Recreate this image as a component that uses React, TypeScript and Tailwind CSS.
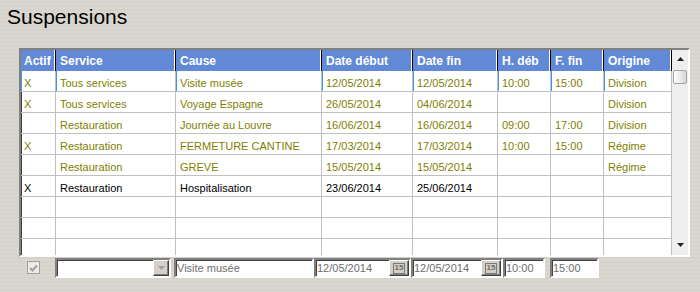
import React from 'react';

type Col = { label: string; w: string; pl: string };

const cols: Col[] = [
  { label: 'Actif', w: 'w-[35px]', pl: 'pl-[3px]' },
  { label: 'Service', w: 'w-[120px]', pl: 'pl-[4px]' },
  { label: 'Cause', w: 'w-[146px]', pl: 'pl-[4px]' },
  { label: 'Date début', w: 'w-[91px]', pl: 'pl-[4px]' },
  { label: 'Date fin', w: 'w-[85px]', pl: 'pl-[4px]' },
  { label: 'H. déb', w: 'w-[53px]', pl: 'pl-[4px]' },
  { label: 'F. fin', w: 'w-[53px]', pl: 'pl-[4px]' },
  { label: 'Origine', w: 'w-[68px]', pl: 'pl-[4px]' },
];

type Row = { cells: string[]; color: string };

const rows: Row[] = [
  { cells: ['X', 'Tous services', 'Visite musée', '12/05/2014', '12/05/2014', '10:00', '15:00', 'Division'], color: 'text-[#808000]' },
  { cells: ['X', 'Tous services', 'Voyage Espagne', '26/05/2014', '04/06/2014', '', '', 'Division'], color: 'text-[#808000]' },
  { cells: ['', 'Restauration', 'Journée au Louvre', '16/06/2014', '16/06/2014', '09:00', '17:00', 'Division'], color: 'text-[#808000]' },
  { cells: ['X', 'Restauration', 'FERMETURE CANTINE', '17/03/2014', '17/03/2014', '10:00', '15:00', 'Régime'], color: 'text-[#808000]' },
  { cells: ['', 'Restauration', 'GREVE', '15/05/2014', '15/05/2014', '', '', 'Régime'], color: 'text-[#808000]' },
  { cells: ['X', 'Restauration', 'Hospitalisation', '23/06/2014', '25/06/2014', '', '', ''], color: 'text-black' },
  { cells: ['', '', '', '', '', '', '', ''], color: 'text-black' },
  { cells: ['', '', '', '', '', '', '', ''], color: 'text-black' },
  { cells: ['', '', '', '', '', '', '', ''], color: 'text-black' },
];

const sunken =
  'border-2 border-t-[#808080] border-l-[#808080] border-r-white border-b-white shadow-[inset_1px_1px_0_#404040]';

function CalButton() {
  return (
    <div className="ml-auto flex h-full w-[20px] shrink-0 items-center justify-center border border-t-white border-l-white border-r-[#404040] border-b-[#404040] bg-[#d4d0c8] shadow-[inset_-1px_-1px_0_#808080]">
      <div className="flex h-[11px] w-[12px] items-center justify-center border border-[#7a7a7a] text-[8px] leading-none font-bold text-[#6e6e6e]">
        15
      </div>
    </div>
  );
}

export default function App() {
  return (
    <div className="h-[292px] w-[700px] overflow-hidden bg-[repeating-linear-gradient(180deg,#dbd8d1_0px,#dbd8d1_1px,#d3d0c9_1px,#d3d0c9_2px,#d8d5ce_2px,#d8d5ce_4px)] font-['Liberation_Sans',Arial,sans-serif]">
      <div className="pl-[7px] pt-[5px] text-[21px] leading-[24px] text-black">Suspensions</div>

      <div className={`ml-[19px] mt-[19px] flex h-[209px] w-[671px] overflow-hidden bg-white ${sunken}`}>
        <div className="flex w-[651px] flex-col overflow-hidden">
          <div className="flex h-[21px] shrink-0 bg-[#6189d5]">
            {cols.map((c) => (
              <div
                key={c.label}
                className={`${c.w} ${c.pl} h-full shrink-0 border-r border-black pt-[1px] text-[12px] leading-[20px] font-bold whitespace-nowrap text-white shadow-[inset_-1px_0_0_#ffffff]`}
              >
                {c.label}
              </div>
            ))}
          </div>
          {rows.map((r, ri) => (
            <div key={ri} className={`flex h-[21px] shrink-0 ${r.color}`}>
              {r.cells.map((v, ci) => (
                <div
                  key={ci}
                  className={`${cols[ci].w} ${cols[ci].pl} h-full shrink-0 overflow-hidden border-r border-b border-[#c0c0c0] pt-[2px] text-[11px] leading-[20px] whitespace-nowrap ${
                    ri === 0 ? 'shadow-[inset_1px_0_0_#3d95f5]' : ''
                  }`}
                >
                  {v}
                </div>
              ))}
            </div>
          ))}
        </div>

        <div className="flex w-[16px] shrink-0 flex-col items-center bg-[#eeeeee]">
          <svg width="7" height="4" viewBox="0 0 7 4" className="mt-[7px]">
            <path d="M3.5 0 L7 4 L0 4 Z" fill="#222" />
          </svg>
          <div className="mt-[9px] h-[14px] w-[14px] rounded-[2px] border border-[#a4a4a4] bg-[linear-gradient(90deg,#ffffff,#d6d6d6)]" />
          <div className="flex-1" />
          <svg width="7" height="4" viewBox="0 0 7 4" className="mb-[8px]">
            <path d="M0 0 L7 0 L3.5 4 Z" fill="#222" />
          </svg>
        </div>
      </div>

      <div className="mt-[1px] flex items-start pl-[27px] text-[11px] text-[#6e6e6e]">
        <div className="mt-[3px] flex h-[13px] w-[13px] shrink-0 items-center justify-center border border-[#a0a0a0] bg-[#ecebe6]">
          <svg width="9" height="8" viewBox="0 0 9 8">
            <path d="M1 4 L3.5 6.5 L8 1.5" stroke="#a0a0a0" strokeWidth="2" fill="none" />
          </svg>
        </div>

        <div className={`ml-[15px] flex h-[20px] w-[116px] shrink-0 bg-white ${sunken}`}>
          <div className="ml-auto flex h-full w-[16px] items-center justify-center border border-t-white border-l-white border-r-[#404040] border-b-[#404040] bg-[#d4d0c8] shadow-[inset_-1px_-1px_0_#808080]">
            <svg width="7" height="4" viewBox="0 0 7 4">
              <path d="M0 0 L7 0 L3.5 4 Z" fill="#a0a0a0" />
            </svg>
          </div>
        </div>

        <div className={`ml-[3px] flex h-[20px] w-[140px] shrink-0 items-center bg-white pl-[1px] leading-[16px] ${sunken}`}>
          Visite musée
        </div>

        <div className={`flex h-[20px] w-[97px] shrink-0 items-center bg-white pl-[1px] leading-[16px] ${sunken}`}>
          <span>12/05/2014</span>
          <CalButton />
        </div>

        <div className={`flex h-[20px] w-[92px] shrink-0 items-center bg-white pl-[1px] leading-[16px] ${sunken}`}>
          <span>12/05/2014</span>
          <CalButton />
        </div>

        <div className={`flex h-[20px] w-[42px] shrink-0 items-center bg-white pl-[1px] leading-[16px] ${sunken}`}>
          10:00
        </div>

        <div className={`ml-[5px] flex h-[20px] w-[49px] shrink-0 items-center bg-white pl-[1px] leading-[16px] ${sunken}`}>
          15:00
        </div>
      </div>
    </div>
  );
}
